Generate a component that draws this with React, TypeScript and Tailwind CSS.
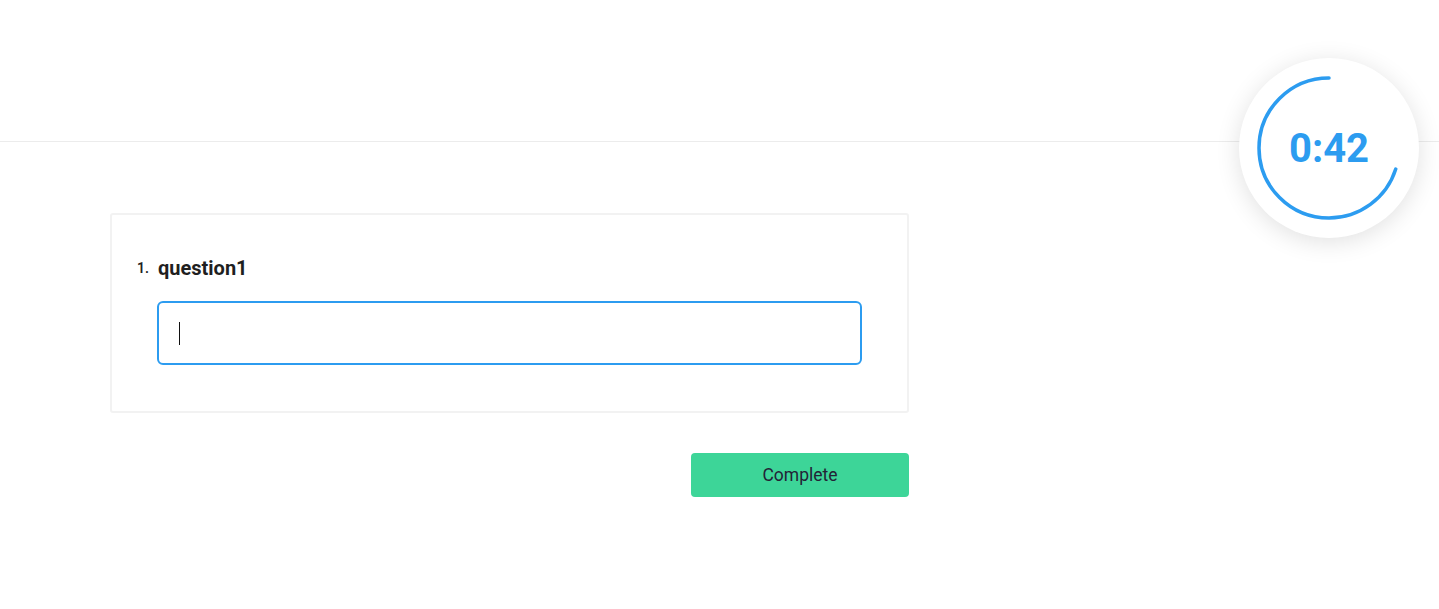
import React from "react";

const R = 70;
const C = 2 * Math.PI * R;

function Timer({ left, total }: { left: number; total: number }) {
  const frac = left / total;
  const label = `${Math.floor(left / 60)}:${String(left % 60).padStart(2, "0")}`;
  return (
    <div className="absolute left-[1239px] top-[58px] flex h-[180px] w-[180px] items-center justify-center rounded-full bg-white shadow-[0_4px_24px_rgba(0,0,0,0.12)]">
      <svg width="180" height="180" viewBox="0 0 180 180" className="absolute inset-0">
        <circle
          cx="90"
          cy="90"
          r={R}
          fill="none"
          stroke="#2c9cf0"
          strokeWidth="3.5"
          strokeLinecap="round"
          strokeDasharray={`${C * frac} ${C}`}
          transform="translate(180 0) scale(-1 1) rotate(-90 90 90)"
        />
      </svg>
      <span className="relative mt-[2px] font-['Roboto',sans-serif] text-[40px] font-bold text-[#2c9cf0]">
        {label}
      </span>
    </div>
  );
}

export default function App() {
  return (
    <div className="relative min-h-[609px] bg-white font-['Roboto',sans-serif] text-[#1f1f1f]">
      <div className="h-[142px] border-b border-[#ececec]" />

      <div className="ml-[110px] mt-[71px] w-[799px]">
        <div className="rounded-[3px] border-2 border-[#f2f2f2] pb-[46px] pl-[25px] pr-[45px] pt-[41px]">
          <div className="flex h-[24px] items-center gap-[9px]">
            <span className="text-[14px] font-semibold leading-[24px]">1.</span>
            <span className="text-[20px] font-bold leading-[24px]">question1</span>
          </div>
          <div className="ml-[20px] mt-[21px] flex h-[64px] items-center rounded-[6px] border-2 border-[#2c9cf0] px-[20px]">
            <span className="h-[23px] w-px bg-[#111]" />
          </div>
        </div>

        <div className="mt-[40px] flex justify-end">
          <button className="h-[44px] w-[218px] rounded-[4px] bg-[#3dd598] text-[17.5px] text-[#232336]">
            Complete
          </button>
        </div>
      </div>

      <Timer left={42} total={60} />
    </div>
  );
}
